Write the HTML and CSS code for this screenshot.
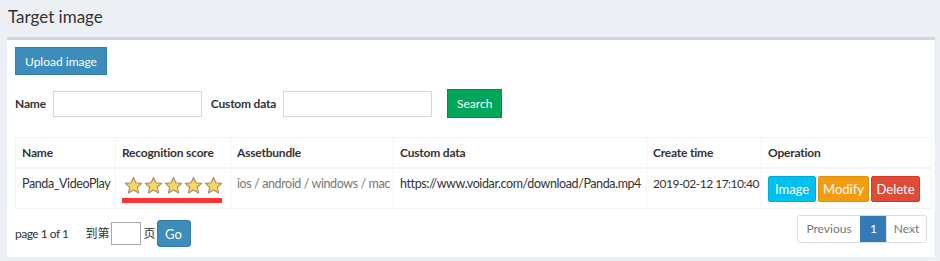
FILE: index.html
```html
<!DOCTYPE html>
<html lang="en">
<head>
    <meta charset="UTF-8">
    <title>Target image</title>
    <link rel="stylesheet" href="styles.css">
</head>
<body>
    <h1 class="page-title">Target image</h1>

    <div class="box">
        <button class="btn btn-primary">Upload image</button>

        <div class="search-row">
            <label>Name</label>
            <input type="text" class="field">
            <label>Custom data</label>
            <input type="text" class="field">
            <button class="btn btn-success">Search</button>
        </div>

        <table class="data-table">
            <thead>
                <tr>
                    <th class="c-name">Name</th>
                    <th class="c-score">Recognition score</th>
                    <th class="c-asset">Assetbundle</th>
                    <th class="c-custom">Custom data</th>
                    <th class="c-time">Create time</th>
                    <th class="c-ops">Operation</th>
                </tr>
            </thead>
            <tbody>
                <tr>
                    <td>Panda_VideoPlay</td>
                    <td>
                        <div class="stars">
                            <svg viewBox="0 0 20 20"><path d="M10 1.5l2.5 5.6 6.1.6-4.6 4.1 1.3 6-5.3-3.1-5.3 3.1 1.3-6L1.4 7.7l6.1-.6z"/></svg>
                            <svg viewBox="0 0 20 20"><path d="M10 1.5l2.5 5.6 6.1.6-4.6 4.1 1.3 6-5.3-3.1-5.3 3.1 1.3-6L1.4 7.7l6.1-.6z"/></svg>
                            <svg viewBox="0 0 20 20"><path d="M10 1.5l2.5 5.6 6.1.6-4.6 4.1 1.3 6-5.3-3.1-5.3 3.1 1.3-6L1.4 7.7l6.1-.6z"/></svg>
                            <svg viewBox="0 0 20 20"><path d="M10 1.5l2.5 5.6 6.1.6-4.6 4.1 1.3 6-5.3-3.1-5.3 3.1 1.3-6L1.4 7.7l6.1-.6z"/></svg>
                            <svg viewBox="0 0 20 20"><path d="M10 1.5l2.5 5.6 6.1.6-4.6 4.1 1.3 6-5.3-3.1-5.3 3.1 1.3-6L1.4 7.7l6.1-.6z"/></svg>
                        </div>
                        <div class="underline"></div>
                    </td>
                    <td class="muted">ios / android / windows / mac</td>
                    <td>https://www.voidar.com/download/Panda.mp4</td>
                    <td class="date">2019-02-12 17:10:40</td>
                    <td>
                        <div class="ops">
                            <button class="btn btn-info">Image</button>
                            <button class="btn btn-warning">Modify</button>
                            <button class="btn btn-danger">Delete</button>
                        </div>
                    </td>
                </tr>
            </tbody>
        </table>

        <div class="footer-row">
            <div class="jump">
                <span class="page-info">page 1 of 1</span>
                <span>到第</span>
                <input type="text" class="page-input">
                <span>页</span>
                <button class="btn btn-primary btn-go">Go</button>
            </div>
            <div class="pagination">
                <span class="page-link prev">Previous</span>
                <span class="page-link active">1</span>
                <span class="page-link next">Next</span>
            </div>
        </div>
    </div>
</body>
</html>
```

FILE: styles.css
```css
body {
    margin: 0;
    background-color: #ecf0f5;
    font-family: Lato, "Noto Sans CJK SC", sans-serif;
    font-size: 13px;
    line-height: 20px;
    color: #333;
}
.page-title {
    margin: 0;
    padding: 5px 8px 0;
    height: 32px;
    font-size: 17px;
    font-weight: 400;
    line-height: 24px;
}
.box {
    margin-left: 7px;
    width: 916px;
    background: #fff;
    border-top: 3px solid #d2d6de;
    box-shadow: 0 1px 1px rgba(0,0,0,0.1);
    padding: 7px 4px 10px 8px;
}
.btn {
    font-family: Lato, sans-serif;
    font-size: 12px;
    color: #fff;
    border: 1px solid transparent;
    border-radius: 0;
    padding: 0 9px;
    height: 28px;
    cursor: pointer;
    white-space: nowrap;
}
.btn-primary {
    background-color: #3c8dbc;
    border-color: #367fa9;
}
.btn-success {
    background-color: #00a65a;
    border-color: #008d4c;
    height: 29px;
    width: 55px;
    padding: 0;
}
.btn-info,
.btn-warning,
.btn-danger {
    font-size: 13px;
    border-radius: 2px;
    height: 26px;
    padding: 0;
}
.btn-info {
    background-color: #00c0ef;
    border-color: #00acd6;
    width: 48px;
}
.btn-warning {
    background-color: #f39c12;
    border-color: #e08e0b;
    width: 51px;
}
.btn-danger {
    background-color: #dd4b39;
    border-color: #d73925;
    width: 49px;
}
.search-row {
    display: flex;
    align-items: center;
    margin-top: 14px;
    font-size: 12px;
    font-weight: 700;
    letter-spacing: -0.2px;
}
.search-row label {
    margin-right: 7px;
}
.field {
    width: 149px;
    height: 26px;
    box-sizing: border-box;
    border: 1px solid #d2d6de;
    margin-right: 9px;
}
.search-row .btn-success {
    margin-left: 6px;
    letter-spacing: 0;
}
.data-table {
    margin-top: 19px;
    width: 916px;
    table-layout: fixed;
    border-collapse: collapse;
    border: 1px solid #f4f4f4;
    letter-spacing: -0.2px;
}
.data-table th,
.data-table td {
    box-sizing: border-box;
    border: 1px solid #f4f4f4;
    padding: 5px 6px 4px;
    text-align: left;
    vertical-align: top;
    white-space: nowrap;
}
.data-table th {
    font-size: 12px;
    font-weight: 700;
    border-bottom-width: 2px;
}
.data-table td {
    padding: 5px 5px 5px 6px;
    height: 39px;
    font-size: 12.5px;
    letter-spacing: -0.4px;
}
.data-table td.date {
    font-size: 12px;
    letter-spacing: -0.5px;
}
.c-name { width: 100px; }
.c-score { width: 115px; }
.c-asset { width: 163px; }
.c-custom { width: 253px; }
.c-time { width: 115px; }
.c-ops { width: 170px; }
.muted {
    color: #777;
}
.stars {
    display: flex;
    gap: 1px;
    padding-top: 2px;
    margin-left: 2px;
}
.stars svg {
    width: 19px;
    height: 19px;
    fill: #f8d765;
    stroke: #a09070;
    stroke-width: 1.2;
    stroke-linejoin: round;
}
.underline {
    width: 100px;
    height: 5px;
    background: #f33;
    margin-top: 3px;
}
.ops {
    display: flex;
    gap: 2px;
    padding-top: 2px;
}
.footer-row {
    display: flex;
    justify-content: space-between;
    margin-top: 6px;
    padding-right: 4px;
}
.jump {
    display: flex;
    align-items: center;
    font-size: 12px;
    margin-top: 5px;
}
.page-info {
    margin-right: 17px;
    letter-spacing: -0.5px;
}
.page-input {
    width: 30px;
    height: 23px;
    box-sizing: border-box;
    border: 1px solid #aaa;
    margin: 0 2px;
}
.btn-go {
    height: 27px;
    width: 34px;
    padding: 0;
    border-radius: 3px;
    font-size: 13px;
    margin-left: 1px;
}
.pagination {
    display: flex;
    border: 1px solid #ddd;
    border-radius: 3px;
    height: 26px;
    font-size: 12px;
}
.page-link {
    box-sizing: border-box;
    padding: 3px 0;
    text-align: center;
    color: #777;
}
.page-link.prev { width: 62px; }
.page-link.active { width: 26px; }
.page-link.next { width: 40px; }
.page-link + .page-link {
    border-left: 1px solid #ddd;
}
.page-link.active {
    background: #337ab7;
    color: #fff;
    border-color: #337ab7;
}
```
